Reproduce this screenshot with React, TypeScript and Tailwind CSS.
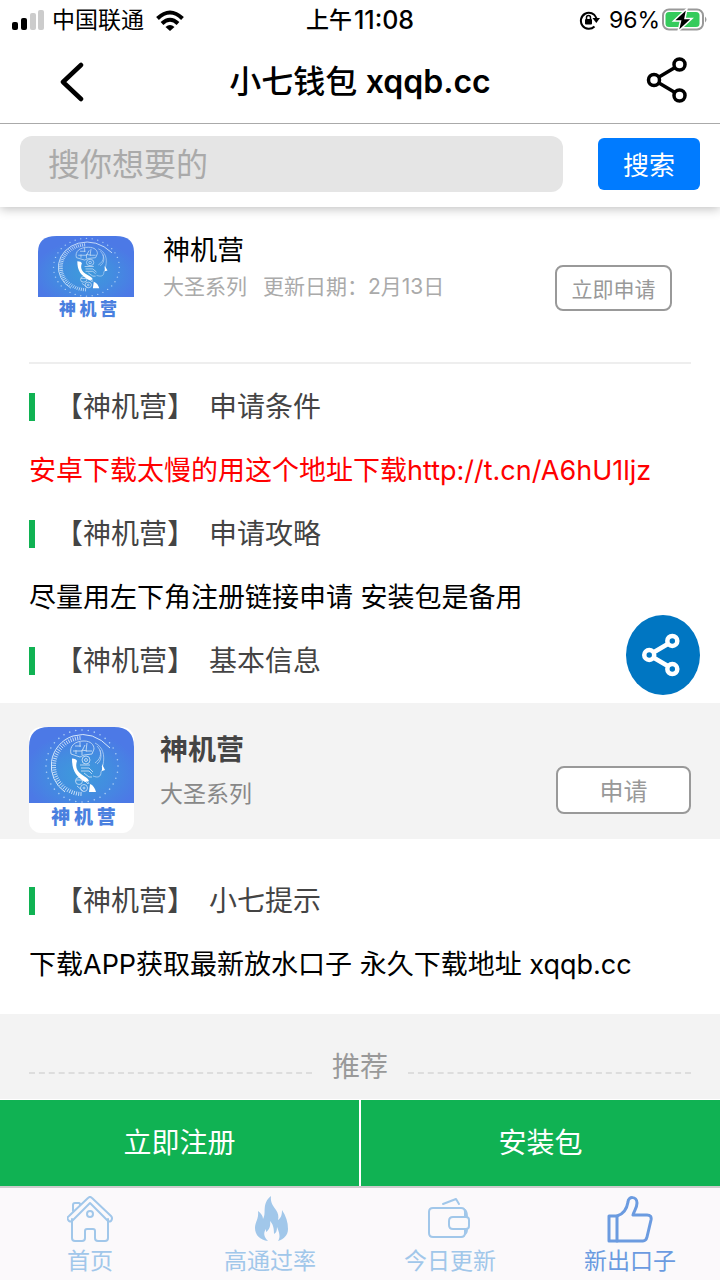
import type { ReactNode } from 'react';

const ticks = Array.from({ length: 38 }, (_, i) => {
  const a = ((92 + i * 4.7) * Math.PI) / 180;
  const c = Math.cos(a);
  const s = Math.sin(a);
  return { x1: 53 + 26 * c, y1: 39 + 26 * s, x2: 53 + 30 * c, y2: 39 + 30 * s };
});

const dots = Array.from({ length: 36 }, (_, i) => {
  const a = (i * 10 * Math.PI) / 180;
  return { cx: 53 + 36 * Math.cos(a), cy: 39 + 36 * Math.sin(a) };
});

function Emblem({ id, className }: { id: string; className: string }) {
  return (
    <svg viewBox="0 0 105 76" preserveAspectRatio="none" className={className} aria-hidden="true">
      <defs>
        <radialGradient id={id} cx="50%" cy="62%" r="55%">
          <stop offset="0" stopColor="#3d9bdb" />
          <stop offset="0.5" stopColor="#438de0" />
          <stop offset="1" stopColor="#4c79e6" />
        </radialGradient>
      </defs>
      <path d="M0 76V20Q0 0 20 0h65q20 0 20 20v56z" fill={`url(#${id})`} />
      {dots.map((d, i) => (
        <circle key={i} cx={d.cx} cy={d.cy} r="0.8" fill="#a9cdf5" />
      ))}
      <g stroke="#d5e7fa" strokeWidth="0.9">
        {ticks.map((t, i) => (
          <line key={i} {...t} />
        ))}
      </g>
      <path d="M36 65A31.500 31.500 0 0 1 44 9q20-6 37 12" fill="none" stroke="#d5e7fa" strokeWidth="1" />
      <g fill="none" stroke="#c5dcf6" strokeWidth="0.9">
        <path d="M42 27c-2-8 4-13 13-13 7 0 10 4 10 8l-2 5-8 1-4 2-9-3z" />
        <path d="M44 24h9l3-6M46 19h6m-1-4v5m7-4-1 8h6M47 27v-4m6 5v-5l5 1" />
        <path d="M66 16c8 4 10 12 8 22l-1 2m0 3-1 2c0 5-3 6-8 4M68 19c5 5 5 12-2 17M71 23c2 6 1 11-3 14" strokeWidth="0.7" />
        <circle cx="57" cy="33" r="4" />
        <circle cx="57" cy="33" r="1.500" />
        <path d="M51 38h10m-9 3h8l4 4m-12-1h8l3 3m-8-1 5 4h3M47 53h8l4 4m-2-6 3 6m-12 2 6 5" />
        <circle cx="55" cy="61" r="3.500" />
        <circle cx="55" cy="61" r="1" />
        <circle cx="50" cy="54" r="3.500" />
      </g>
      <path d="M43 31.500c3 0 4.500 1 5 2.500-2 6 0 10 4 13 4 3 7 4 8 7l-4 1C47 49 43 44 43 31.500zM61 57c3 1 5 4 6 8h-7zM73 37l3 6-3 1z" fill="#fff" />
    </svg>
  );
}

function ShareIcon({ className, strokeWidth }: { className: string; strokeWidth: number }) {
  return (
    <svg viewBox="0 0 42 46" className={className} fill="none" stroke="currentColor" strokeWidth={strokeWidth} aria-hidden="true">
      <circle cx="8" cy="23" r="5.500" />
      <circle cx="33.500" cy="7.500" r="5.500" />
      <circle cx="33.500" cy="38.500" r="5.500" />
      <path d="M13 20 29 10.500M13 26 29 35.500" />
    </svg>
  );
}

function Heading({ children }: { children: ReactNode }) {
  return (
    <h2 className="flex h-16 items-center text-[28px] text-[#444]">
      <span className="h-7 w-1.5 bg-[#10b253]" />
      <span className="ml-5">【神机营】</span>
      <span className="ml-3.5">{children}</span>
    </h2>
  );
}

function StatusBar() {
  return (
    <div className="flex h-10 items-center px-3 text-[23px] leading-8">
      <div className="flex flex-1 items-center">
        <svg viewBox="0 0 32 20" className="h-5 w-8" aria-hidden="true">
          <rect x="0" y="12" width="6" height="8" rx="2" />
          <rect x="9" y="8" width="6" height="12" rx="2" />
          <rect x="18" y="3" width="6" height="17" rx="2" fill="#ccc" />
          <rect x="26" y="0" width="6" height="20" rx="2" fill="#ccc" />
        </svg>
        <span className="ml-2">中国联通</span>
        <svg viewBox="0 0 28 21" className="ml-3 h-[21px] w-7" aria-hidden="true">
          <g fill="none" stroke="#000" strokeWidth="4">
            <path d="M1.500 8.500Q14-3.500 26.500 8.500" />
            <path d="M6 13.500Q14 6 22 13.500" />
          </g>
          <path d="M9.500 17q4.500-4 9 0L14 21z" />
        </svg>
      </div>
      <div className="flex items-center gap-0.5 font-medium">
        <span>上午</span>
        <span className="text-[25px]">11:08</span>
      </div>
      <div className="flex flex-1 items-center justify-end">
        <svg viewBox="0 0 22 20" className="h-5 w-[22px]" aria-hidden="true">
          <path d="M15.500 16.500A8 8 0 1 1 17.400 8" fill="none" stroke="#000" strokeWidth="2" />
          <path d="M13.500 8h7.500l-3.700 5z" />
          <rect x="6" y="9" width="7" height="5.500" rx="1" />
          <path d="M7.500 9.500V7.500a2 2 0 0 1 4 0v2" fill="none" stroke="#000" strokeWidth="1.500" />
        </svg>
        <span className="ml-2">96%</span>
        <svg viewBox="0 0 46 24" className="ml-0.5 h-6 w-[46px]" aria-hidden="true">
          <rect x="1" y="1.500" width="40" height="20" rx="6" fill="#fff" stroke="#999" strokeWidth="2" />
          <rect x="3.500" y="4" width="34" height="15" rx="3.500" fill="#35cb5c" />
          <path d="M43 8.500q3 3 0 6z" fill="#999" />
          <path d="M25 0.500 11.500 13h7L16 23.500 30 10.500h-7z" stroke="#fff" strokeWidth="1.500" />
        </svg>
      </div>
    </div>
  );
}

const tabs = [
  {
    label: '首页',
    color: 'text-[#a1c7ea]',
    icon: (
      <>
        <path d="M5 23v19q0 3 3 3h7q3 0 3-3v-7q0-2 2-2h6q2 0 2 2v7q0 3 3 3h7q3 0 3-3V23" />
        <path d="M2 25q-3-3 0-5L21 2q2-2 4 0l19 18q2 2 0 5-2 1-3 0L23 7 5 25q-1 1-3 0zM6 15V9q0-2 2-2h4q1 0 1 2" />
        <circle cx="23" cy="18" r="3" />
      </>
    ),
  },
  {
    label: '高通过率',
    color: 'text-[#a1c7ea]',
    icon: (
      <path
        fill="currentColor"
        stroke="none"
        d="M24 0c-1 7 3 11 5 14 2 3 3 6 2 10 3-2 4-5 4-10 4 6 6 12 6 19 0 6-4 10-10 12 3-4 1-9-1-14 0 4-1 6-3 7 0-6-1-10-4-13 1 5-1 9-4 11v-3c-3 4-2 8 2 12-8-1-13-6-13-13 0-6 4-9 3-17 3 2 5 5 5 8 4-6-2-15 8-23z"
      />
    ),
  },
  {
    label: '今日更新',
    color: 'text-[#a1c7ea]',
    icon: (
      <>
        <path d="M38 20v-4q0-4-4-4H6q-4 0-4 4v21q0 4 4 4h28q4 0 4-4v-3" />
        <path d="M26 21h13q3 0 3 3v6q0 3-3 3H26q-4 0-4-4v-4q0-4 4-4zM38 14q2 2 2 7M40 33q0 4-2 5" />
        <path d="M16 8 29 3l3 5" />
      </>
    ),
  },
  {
    label: '新出口子',
    color: 'text-[#6b9be0]',
    icon: (
      <g strokeWidth="3">
        <path d="M10 20C17 18 20 12 21 6c0-6 9-6 9 1 0 5-3 8-4 12h14q5 0 4 5l-4 17q-1 4-4 4H2V20z" />
        <path d="M10 20v25" />
      </g>
    ),
  },
];

export default function App() {
  return (
    <div className="flex min-h-screen flex-col bg-white font-['Inter','Noto_Sans_CJK_SC',sans-serif] text-black">
      <header className="relative shadow-[0_2px_10px_rgba(0,0,0,0.25)]">
        <StatusBar />
        <div className="flex h-21 items-center justify-between border-b border-[#aaa] px-8">
          <button type="button" aria-label="返回" className="flex h-12 w-20 items-center justify-center">
            <svg viewBox="0 0 24 42" className="h-[42px] w-6" fill="none" stroke="#000" strokeWidth="4.500" strokeLinecap="round" strokeLinejoin="round" aria-hidden="true">
              <path d="M21 4 3 21 21 38" />
            </svg>
          </button>
          <h1 className="text-[32px] font-medium">
            小七钱包 <span className="font-semibold">xqqb.cc</span>
          </h1>
          <button type="button" aria-label="分享" className="flex h-12 w-20 items-center justify-end pb-1">
            <ShareIcon className="h-[46px] w-[42px]" strokeWidth={3.5} />
          </button>
        </div>
        <form className="flex items-center gap-[35px] px-5 pt-3 pb-[15px]" onSubmit={(e) => e.preventDefault()}>
          <input
            type="text"
            aria-label="搜索内容"
            placeholder="搜你想要的"
            className="h-14 min-w-0 flex-1 rounded-xl bg-[#e5e5e5] px-7 text-[32px] placeholder:text-[#aaa] outline-none"
          />
          <button type="submit" className="h-13 w-[102px] rounded-md bg-[#007bff] pt-0.5 text-[26px] text-white">
            搜索
          </button>
        </form>
      </header>

      <main className="flex-1">
        <section className="mx-[29px] flex h-[157px] items-start border-b-2 border-[#eee] px-[9px] pt-7">
          <div className="mt-px w-24">
            <Emblem id="glowSmall" className="block h-[61px] w-full" />
            <div className="pl-1 text-center text-[17px] leading-6 font-black text-[#4a80df]">神 机 营</div>
          </div>
          <div className="ml-[29px] flex-1">
            <h2 className="text-[27px] leading-8">神机营</h2>
            <p className="mt-1 flex gap-4 text-[21px] leading-8 text-[#aaa]">
              <span>大圣系列</span>
              <span>更新日期：2月13日</span>
            </p>
          </div>
          <button type="button" className="mt-[30px] mr-2.5 h-[46px] w-[117px] rounded-lg border-2 border-[#999] pt-1 text-[21px] text-[#999]">
            立即申请
          </button>
        </section>

        <section className="px-[29px] pt-[11px] pb-[10px] text-[27px] leading-[63px]">
          <Heading>申请条件</Heading>
          <p className="text-[#f00]">安卓下载太慢的用这个地址下载http://t.cn/A6hU1ljz</p>
          <Heading>申请攻略</Heading>
          <p>尽量用左下角注册链接申请 安装包是备用</p>
          <Heading>基本信息</Heading>
        </section>

        <section className="flex h-[136px] items-start bg-[#f3f3f3] px-[29px] pt-6">
          <div className="h-[106px] w-[105px] overflow-hidden rounded-xl bg-white">
            <Emblem id="glowLarge" className="block h-[76px] w-full" />
            <div className="pl-1 text-center text-[19px] leading-[30px] font-black text-[#4a80df]">神 机 营</div>
          </div>
          <div className="ml-[26px] flex-1">
            <h2 className="text-[28px] leading-[46px] font-bold text-[#444]">神机营</h2>
            <p className="text-[23px] leading-[42px] text-[#888]">大圣系列</p>
          </div>
          <button type="button" className="mt-[39px] h-12 w-[135px] rounded-lg border-2 border-[#999] bg-white pt-1 text-[24px] text-[#999]">
            申请
          </button>
        </section>

        <section className="px-[29px] pt-[30px] pb-[18px] text-[27px] leading-[63px]">
          <Heading>小七提示</Heading>
          <p>下载APP获取最新放水口子 永久下载地址 xqqb.cc</p>
        </section>

        <section className="flex h-[85px] items-center gap-5 bg-[#f3f3f3] px-[29px] pt-5">
          <span className="mt-3 flex-1 border-t-2 border-dashed border-[#ddd]" />
          <h2 className="text-[28px] text-[#999]">推荐</h2>
          <span className="mt-3 flex-1 border-t-2 border-dashed border-[#ddd]" />
        </section>
      </main>

      <footer className="sticky bottom-0">
        <div className="grid grid-cols-2 gap-0.5 bg-white text-[28px] text-white">
          <button type="button" className="h-[86px] bg-[#10b253]">立即注册</button>
          <button type="button" className="h-[86px] bg-[#10b253]">安装包</button>
        </div>
        <nav className="grid h-[94px] grid-cols-4 border-t-2 border-[#ccc] bg-[#fbf9fb]">
          {tabs.map((t) => (
            <a key={t.label} href="#" className={`flex flex-col items-center pt-2 text-[23px] leading-9 ${t.color}`}>
              <svg viewBox="0 0 46 47" className="h-[47px] w-[46px]" fill="none" stroke="currentColor" strokeWidth="2" strokeLinejoin="round" strokeLinecap="round" aria-hidden="true">
                {t.icon}
              </svg>
              {t.label}
            </a>
          ))}
        </nav>
      </footer>

      <button type="button" aria-label="分享此页" className="fixed right-5 bottom-[585px] flex h-20 w-[74px] items-center justify-center rounded-[50%] bg-[#0076c2] pr-1 text-white">
        <ShareIcon className="h-11 w-[38px]" strokeWidth={5} />
      </button>
    </div>
  );
}
